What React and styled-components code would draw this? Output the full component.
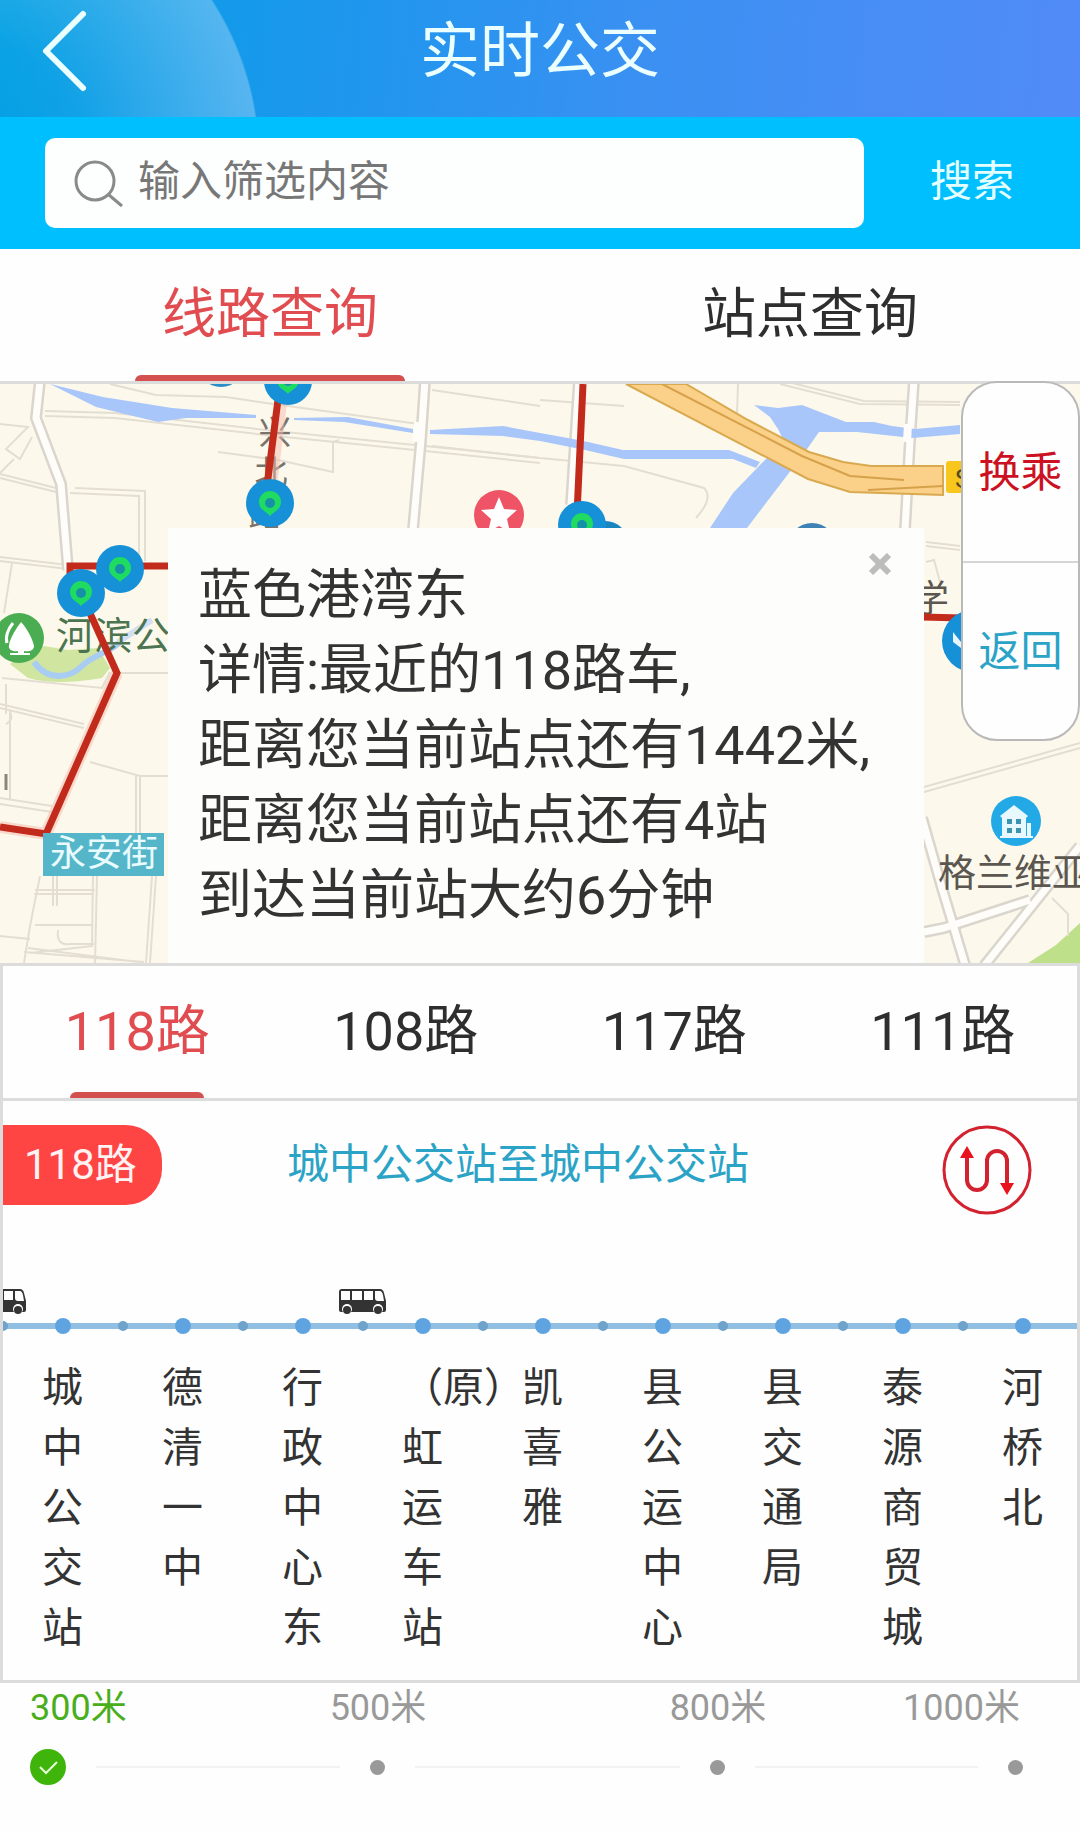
import React, { useState } from 'react';
import styled, { createGlobalStyle } from 'styled-components';

const SEARCH_TABS = ['线路查询', '站点查询'];
const ROUTES = ['118路', '108路', '117路', '111路'];

const STOPS = [
  { name: '城中公交站', bus: true },
  { name: '德清一中' },
  { name: '行政中心东' },
  { name: '（原）虹运车站', bus: true },
  { name: '凯喜雅' },
  { name: '县公运中心' },
  { name: '县交通局' },
  { name: '泰源商贸城' },
  { name: '河桥北' },
];

const DISTANCES = ['300米', '500米', '800米', '1000米'];

const POPUP_LINES = [
  '蓝色港湾东',
  '详情:最近的118路车,',
  '距离您当前站点还有1442米,',
  '距离您当前站点还有4站',
  '到达当前站大约6分钟',
];

const Pin = ({ x, y }) => (
  <g transform={`translate(${x} ${y})`}>
    <circle r="24" fill="#1690d6" />
    <path d="M0 13C-3 9-11 7-11-1a11 11 0 0 1 22 0C11 7 3 9 0 13z" fill="#1fdb62" />
    <circle r="5" fill="#1690a8" />
  </g>
);

const MapDrawing = () => (
  <MapSvg viewBox="0 384 1080 579" preserveAspectRatio="xMidYMid slice" aria-hidden="true">
    <rect y="384" width="1080" height="579" fill="#fcf9ec" />

    {/* parks */}
    <path d="M10 664q14-12 34-18l24 4 30-2 12 20-8 10q-46 8-74 0z" fill="#cfe5a0" />
    <path d="M34 662c14 20 36 16 48 4s30-14 40-26" fill="none" stroke="#a9cdf2" strokeWidth="6" />
    <path d="M118 642l34-22" fill="none" stroke="#d3e0f4" strokeWidth="6" />
    <path d="M1028 963l28-18 24-22v40z" fill="#bfe08a" />

    {/* side streets */}
    <g fill="none" stroke="#e4ded2" strokeWidth="2">
      <path d="M110 384l46 11 70 2 40 6 160 22M45 411l70 2 160 18 150 15 115 12" />
      <path d="M45 416l70 2 160 18 150 15 115 12M218 452l60 8 55 12v-30l6-2" />
      <path d="M0 424l28 3-22 22 14 10 12-22M0 474l56 14M0 478l56 14M14 459l-14 14" />
      <path d="M75 488l70 3v70M70 493l69 3v60M0 557l68 8M0 561l68 8M12 563l-8 50" />
      <path d="M432 390l108 16M540 400l84 6M432 446l108 12M540 458l84 8 80 22q10 10-8 30" />
      <path d="M738 384l-1 30M780 384l80 20 100 1M784 381l80 20 96 1" />
      <path d="M117 673h51M0 704l84 20M0 708l84 20M90 762l50 14h28M140 776v60M136 776v60M0 798l52 8M0 804l52 8M10 710v90M6 724q8-4 4-12" />
      <path d="M2 678l100 10 8-16M6 684v30" />
      <path d="M40 876l-10 50-6 37M53 876v30M57 876v30M35 890h60M34 894h60M97 876l-2 87M93 876l-1 70-62 7M35 925h58M24 952l120 10M28 948l110 14M152 876l-6 87M156 876l-6 87M0 936l30 3M58 930q-2 16 12 14h24" />
      <path d="M924 787l156-44M924 792l156-44M926 542l34 4M926 546l34 4M926 562l8-2 6 22M1052 898l16 16v22" />
    </g>

    {/* wider streets: grey casing with a light core */}
    <g fill="none" stroke="#dad6ce" strokeWidth="12" strokeLinejoin="round">
      <path d="M40 380l-4 38 25 66 7 86M425 380l-4 60-8 90M914 380l-4 60-5 90M579 380l-8 125" />
      <path d="M922 818l20 70 24 80M924 932l20-4 86-28M984 966l96-120" />
    </g>
    <g fill="none" stroke="#fefdf9" strokeWidth="7" strokeLinejoin="round">
      <path d="M40 380l-4 38 25 66 7 86M425 380l-4 60-8 90M914 380l-4 60-5 90M579 380l-8 125" />
      <path d="M922 818l20 70 24 80M924 932l20-4 86-28M984 966l96-120" />
    </g>

    {/* rivers */}
    <g fill="#a9c6fa">
      <path d="M50 384l53 13 69 11 84 7v3l-70 0-28 4-62-15z" />
      <path d="M294 418l54-1 65 12v4l-69-11-50-2z" />
      <path d="M430 430l73-4 37 7 28 5 20 4 35 8h106l31 12-4 6-23-9H624l-39-9-45-9-37-5-73-2z" />
      <path d="M754 405l24 3 24-3 44 17h28l18 4 23 3 45-4v9l-48 4-55-6h-38l-14 20-58 76h-37l23-35 27-28 24-24-6-12-8-12z" />
    </g>
    <path d="M418 422l-1 20M908 424l-1 18" stroke="#fefdf9" strokeWidth="8" />

    {/* highway */}
    <path d="M626 384h60l62 36 61 32 34 10 28 4 72 0v29l-93-3-42-13z" fill="#fbd088" stroke="#d9a94f" strokeWidth="2" />
    <path d="M662 384l140 72 48 20 54 4M868 490l75-4" fill="none" stroke="#d5a24b" strokeWidth="2" />
    <rect x="946" y="461" width="34" height="32" rx="3" fill="#f9c61d" />
    <text x="955" y="488" fontSize="26" fill="#54491f">S</text>

    {/* street name under the route */}
    <g fontSize="33" fill="#77736c" textAnchor="middle">
      <text x="275" y="444">兴</text>
      <text x="271" y="484">北</text>
      <text x="265" y="526">路</text>
    </g>

    <g fontSize="38" fill="#4c7450">
      <text x="56" y="649">河滨公园</text>
    </g>
    <g fontSize="37" fill="#5b5750">
      <text x="912" y="612">学</text>
      <text x="938" y="886" fontSize="38">格兰维亚</text>
    </g>

    {/* bus route */}
    <g fill="none" stroke="#f3b9ab" strokeWidth="12" opacity="0.5">
      <path d="M117 673L46 834 0 827M282 394l-12 100" />
    </g>
    <g fill="none" stroke="#c22b1c" strokeWidth="7">
      <path d="M280 384l-14 110M583 384l-6 130M168 566H70v14M84 600l33 73L46 834 0 827M922 617l40 1" />
    </g>
    <path d="M6 774v16" stroke="#8a867e" strokeWidth="3" />

    <circle cx="221" cy="363" r="24" fill="#2a8fc9" />
    <Pin x={288} y={381} />
    <Pin x={270} y={503} />
    <Pin x={120} y={569} />
    <Pin x={81} y={593} />
    <circle cx="605" cy="545" r="24" fill="#1a86c0" />
    <Pin x={582} y={525} />
    <circle cx="812" cy="547" r="24" fill="#3f82b5" />
    <circle cx="973" cy="641" r="31" fill="#1690d6" />
    <path d="M953 632l8 10v6l-8-6z" fill="#e6f4ff" />

    {/* points of interest */}
    <circle cx="499" cy="515" r="25" fill="#ee5366" />
    <path d="M499 497l5 12 13 1-10 9 3 13-11-6-11 6 3-13-10-9 13-1z" fill="#fff" />

    <circle cx="19" cy="638" r="25" fill="#4bad51" />
    <path d="M21 622c6 6 12 18 13 24 0 5-6 6-10 5v2h6v2H10v-2h8v-2c-5 1-10-1-9-6 1-7 8-18 12-23z" fill="#fff" />
    <path d="M13 623c-5 6-8 14-6 20" fill="none" stroke="#fff" strokeWidth="3" />

    <circle cx="1016" cy="821" r="25" fill="#22a9e6" />
    <path d="M1014 805l14 11-2 2v18h-24v-18l-2-2zM1027 823h4v13h2v2h-33v-2h27z" fill="#e8f8ff" />
    <path d="M1007 819h5v5h-5zM1016 819h5v5h-5zM1007 828h5v5h-5zM1016 828h5v5h-5z" fill="#3c93b0" />

    <rect x="43" y="833" width="121" height="43" fill="#54b6c8" />
    <text x="50" y="866" fontSize="36" fill="#e9fbff">永安街</text>
  </MapSvg>
);

const BusIcon = () => (
  <Bus viewBox="0 0 47 25" aria-hidden="true">
    <path d="M3 0h38q3 0 4 4l2 8v9q0 2-2 2H2q-2 0-2-2V3q0-3 3-3z" fill="#333" />
    <path d="M2 2h9v9H2zM13 2h10v9H13zM25 2h9v9h-9zM36 2h5q2 0 3 4l1 6h-6q-3 0-3-3z" fill="#fff" />
    <circle cx="8" cy="20" r="5" fill="#fff" />
    <circle cx="39" cy="20" r="5" fill="#fff" />
    <circle cx="8" cy="21" r="4" fill="#333" />
    <circle cx="39" cy="21" r="4" fill="#333" />
  </Bus>
);

const App = () => {
  const [searchTab, setSearchTab] = useState(0);
  const [route, setRoute] = useState(0);
  const [distance, setDistance] = useState(0);

  return (
    <>
      <GlobalStyle />
      <Header>
        <BackButton aria-label="返回上一页">
          <svg width="54" height="90" viewBox="0 0 54 90" fill="none" aria-hidden="true">
            <path d="M47 7L10 44l37 37" stroke="#ebffff" strokeWidth="6" strokeLinecap="round" strokeLinejoin="round" />
          </svg>
        </BackButton>
        <Title>实时公交</Title>
      </Header>

      <SearchBar>
        <SearchBox>
          <svg width="50" height="50" viewBox="0 0 50 50" fill="none" stroke="#8a8a8a" strokeWidth="3" aria-hidden="true">
            <circle cx="22" cy="23" r="19" />
            <path d="M36 37l13 11" />
          </svg>
          <SearchInput type="text" aria-label="筛选" placeholder="输入筛选内容" />
        </SearchBox>
        <SearchButton>搜索</SearchButton>
      </SearchBar>

      <Tabs>
        {SEARCH_TABS.map((label, i) => (
          <Tab key={label} $active={i === searchTab} onClick={() => setSearchTab(i)}>
            {label}
          </Tab>
        ))}
      </Tabs>

      <MapArea>
        <MapDrawing />
        <Popup>
          <CloseButton aria-label="关闭">
            <svg width="22" height="22" viewBox="0 0 22 22" stroke="#bdbdbd" strokeWidth="6" aria-hidden="true">
              <path d="M2 2l18 18M20 2L2 20" />
            </svg>
          </CloseButton>
          {POPUP_LINES.map((line) => (
            <p key={line}>{line}</p>
          ))}
        </Popup>
        <SidePanel>
          <SideButton $color="#cc1122">换乘</SideButton>
          <SideButton $color="#2ba3c7">返回</SideButton>
        </SidePanel>
      </MapArea>

      <RoutePanel>
        <Tabs>
          {ROUTES.map((label, i) => (
            <Tab key={label} $active={i === route} onClick={() => setRoute(i)}>
              {label}
            </Tab>
          ))}
        </Tabs>

        <RouteHead>
          <RouteBadge>{ROUTES[route]}</RouteBadge>
          <RouteName>城中公交站至城中公交站</RouteName>
          <SwapButton aria-label="换向">
            <svg width="90" height="90" viewBox="0 0 90 90" fill="none" stroke="#d3222f" strokeWidth="4" aria-hidden="true">
              <circle cx="45" cy="45" r="43" strokeWidth="3" />
              <path d="M25 31v24a10 10 0 0 0 20 0V36a10 10 0 0 1 20 0v24" />
              <path d="M25 21l7 12H18zM65 70l7-12H58z" fill="#e8131c" stroke="none" />
            </svg>
          </SwapButton>
        </RouteHead>

        <StopList>
          {STOPS.map((stop) => (
            <Stop key={stop.name}>
              <BusSlot>{stop.bus && <BusIcon />}</BusSlot>
              <Rail>
                <HalfDot />
                <StopDot />
              </Rail>
              <StopName>{stop.name}</StopName>
            </Stop>
          ))}
        </StopList>
      </RoutePanel>

      <Distances>
        <DistanceLabels>
          {DISTANCES.map((label, i) => (
            <DistanceLabel key={label} $active={i === distance} onClick={() => setDistance(i)}>
              {label}
            </DistanceLabel>
          ))}
        </DistanceLabels>
        <Track>
          <CheckMark viewBox="0 0 36 36" aria-hidden="true">
            <circle cx="18" cy="18" r="18" fill="#3fb50c" />
            <path d="M10 18l6 6 11-11" fill="none" stroke="#e6ffd9" strokeWidth="2" />
          </CheckMark>
          <TrackLine $span={244} />
          <TrackDot />
          <TrackLine $span={265} />
          <TrackDot />
          <TrackLine $span={223} />
          <TrackDot />
        </Track>
      </Distances>
    </>
  );
};

const GlobalStyle = createGlobalStyle`
  * {
    box-sizing: border-box;
  }

  body {
    margin: 0;
    background: #fdfefd;
    color: #333;
    font-family: Roboto, "Noto Sans CJK SC", sans-serif;
  }

  button {
    border: 0;
    padding: 0;
    background: none;
    color: inherit;
    font: inherit;
    cursor: pointer;
  }

  p, h1, h2, ul {
    margin: 0;
    padding: 0;
  }

  svg {
    display: block;
  }
`;

const Header = styled.header`
  display: grid;
  grid-template-columns: 100px 1fr 100px;
  align-items: center;
  height: 117px;
  padding-bottom: 14px;
  background:
    radial-gradient(circle at -36px 160px, transparent 0, rgba(255, 255, 255, 0.04) 120px, rgba(255, 255, 255, 0.28) 294px, transparent 296px),
    linear-gradient(95deg, #009fe3 0%, #2196ee 35%, #3b90f2 60%, #528bf8 100%);
`;

const BackButton = styled.button`
  display: flex;
  justify-content: flex-end;
  margin-right: 10px;
`;

const Title = styled.h1`
  color: #ebffff;
  font-size: 60px;
  font-weight: 400;
  line-height: 90px;
  text-align: center;
`;

const SearchBar = styled.div`
  display: flex;
  align-items: center;
  padding: 21px 0 21px 45px;
  background: #00bfff;
`;

const SearchBox = styled.label`
  display: flex;
  flex: 1;
  align-items: center;
  gap: 15px;
  height: 90px;
  padding: 0 28px;
  border-radius: 10px;
  background: #fdfefe;
`;

const SearchInput = styled.input`
  flex: 1;
  min-width: 0;
  height: 84px;
  padding: 0 0 4px;
  border: 0;
  outline: 0;
  background: none;
  color: #333;
  font: inherit;
  font-size: 42px;

  &::placeholder {
    color: #777;
    opacity: 1;
  }
`;

const SearchButton = styled.button`
  width: 216px;
  padding-bottom: 2px;
  color: #e4ffff;
  font-size: 42px;
  line-height: 88px;
`;

const Tabs = styled.nav`
  display: flex;
  border-bottom: 3px solid #dcdcdc;
`;

const Tab = styled.button`
  flex: 1;
  padding-top: 6px;
  color: ${({ $active }) => ($active ? '#e04c50' : '#2e2e2e')};
  font-size: 54px;
  line-height: 120px;

  &::after {
    content: "";
    display: block;
    width: 50%;
    height: 6px;
    margin: 0 auto;
    border-radius: 6px 6px 0 0;
    background: ${({ $active }) => ($active ? '#d3504f' : 'transparent')};
  }
`;

const MapArea = styled.section`
  position: relative;
  padding: 144px 156px 0 168px;
`;

const MapSvg = styled.svg`
  position: absolute;
  inset: 0;
  width: 100%;
  height: 100%;
  overflow: hidden;
`;

const Popup = styled.div`
  position: relative;
  padding: 30px;
  background: #fdfdfc;
  font-size: 54px;
  line-height: 75px;
  white-space: nowrap;
`;

const CloseButton = styled.button`
  position: absolute;
  top: 25px;
  right: 33px;
`;

const SidePanel = styled.div`
  position: absolute;
  top: -3px;
  right: 0;
  width: 119px;
  border: 2px solid #b9b9b9;
  border-radius: 36px;
  background: #fefefe;
`;

const SideButton = styled.button`
  display: block;
  width: 100%;
  height: 178px;
  padding-bottom: 8px;
  color: ${({ $color }) => $color};
  font-size: 42px;

  & + & {
    border-top: 2px solid #d5d5d5;
  }
`;

const RoutePanel = styled.section`
  border: 3px solid #dcdcdc;
`;

const RouteHead = styled.div`
  display: flex;
  align-items: flex-start;
  padding: 24px 45px 0 0;
`;

const RouteBadge = styled.span`
  width: 159px;
  padding-left: 21px;
  border-radius: 0 36px 36px 0;
  background: #ff4444;
  color: #fff2f2;
  font-size: 42px;
  line-height: 80px;
`;

const RouteName = styled.h2`
  margin-left: 125px;
  color: #2ba3c7;
  font-size: 42px;
  font-weight: 400;
  line-height: 80px;
`;

const SwapButton = styled.button`
  width: 90px;
  margin-left: auto;
`;

const StopList = styled.ul`
  display: flex;
  padding-bottom: 22px;
  overflow: hidden;
  list-style: none;
`;

const Stop = styled.li`
  display: flex;
  flex: 0 0 120px;
  flex-direction: column;
  align-items: center;
`;

/* a bus waits on the half-way dot before its stop */
const BusSlot = styled.div`
  display: flex;
  align-items: flex-end;
  align-self: flex-start;
  height: 103px;
  padding-bottom: 4px;
`;

const Bus = styled.svg`
  width: 47px;
  height: 25px;
  margin-left: -24px;
`;

const Rail = styled.div`
  display: flex;
  align-items: center;
  align-self: stretch;
  height: 16px;
  background: linear-gradient(#90bfe2, #90bfe2) center / 100% 6px no-repeat;
`;

const HalfDot = styled.span`
  width: 10px;
  height: 10px;
  margin-left: -5px;
  border-radius: 50%;
  background: #6fa3cb;
`;

const StopDot = styled.span`
  width: 16px;
  height: 16px;
  margin-left: 47px;
  border-radius: 50%;
  background: #5fa4e0;
`;

const StopName = styled.span`
  width: 42px;
  padding-top: 24px;
  font-size: 41px;
  line-height: 60px;
`;

const Distances = styled.section`
  padding-top: 2px;
`;

const DistanceLabels = styled.div`
  display: grid;
  grid-template-columns: 178fr 340fr 340fr 132fr;
  padding: 0 60px 0 30px;
`;

const DistanceLabel = styled.button`
  color: ${({ $active }) => ($active ? '#4aae1c' : '#999')};
  font-size: 36px;
  line-height: 46px;

  &:first-child {
    text-align: left;
  }

  &:last-child {
    text-align: right;
  }
`;

const Track = styled.div`
  display: flex;
  align-items: center;
  padding: 18px 57px 48px 30px;
`;

const CheckMark = styled.svg`
  width: 36px;
  height: 36px;
`;

const TrackLine = styled.span`
  flex: ${({ $span }) => $span} 1 0;
  height: 2px;
  margin: 0 30px;
  background: #f1f2f1;
`;

const TrackDot = styled.span`
  width: 15px;
  height: 15px;
  border-radius: 50%;
  background: #999;
`;

export default App;
